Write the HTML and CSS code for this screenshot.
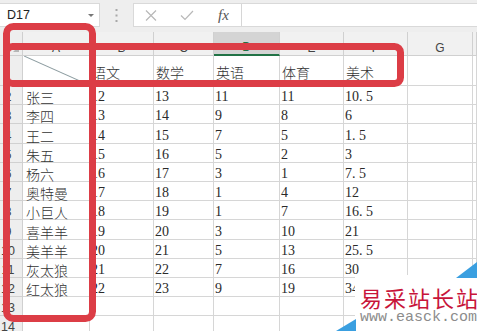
FILE: index.html
```html
<!DOCTYPE html>
<html lang="zh">
<head>
<meta charset="utf-8">
<title>Sheet</title>
<link rel="stylesheet" href="styles.css">
</head>
<body>
<div class="app">
  <div class="fbar">
    <div class="namebox"><span class="ref">D17</span><span class="caret"></span></div>
    <div class="grip">
      <svg width="3" height="13" viewBox="0 0 3 13"><rect x="0.5" y="0" width="2" height="2" fill="#a8a8a8"/><rect x="0.5" y="5.5" width="2" height="2" fill="#a8a8a8"/><rect x="0.5" y="11" width="2" height="2" fill="#a8a8a8"/></svg>
    </div>
    <div class="fbox">
      <div class="btns">
        <svg class="ico ico-x" width="12" height="11" viewBox="0 0 12 11"><path d="M1 0.5 L11 10.5 M11 0.5 L1 10.5" stroke="#b8b8b8" stroke-width="1.2" fill="none"/></svg>
        <svg class="ico ico-ok" width="14" height="11" viewBox="0 0 14 11"><path d="M1 5.5 L5 9.5 L13 1" stroke="#b8b8b8" stroke-width="1.2" fill="none"/></svg>
        <span class="fx">fx</span>
      </div>
      <div class="input"></div>
    </div>
  </div>

  <div class="sheet">
    <div class="corner"><span class="tri"></span></div>
    <div class="ch">A</div><div class="ch">B</div><div class="ch">C</div><div class="ch sel">D</div><div class="ch">E</div><div class="ch">F</div><div class="ch">G</div><div class="ch"></div>

    <div class="rh">1</div>
    <div class="c diag"><svg class="diag-line" viewBox="0 0 66 29" preserveAspectRatio="none"><line x1="0" y1="0" x2="66" y2="29" stroke="#8c9ca0" stroke-width="1" vector-effect="non-scaling-stroke"/></svg></div>
    <div class="c t">语文</div><div class="c t">数学</div><div class="c t">英语</div><div class="c t">体育</div><div class="c t">美术</div><div class="c"></div><div class="c"></div>

    <div class="rh">2</div><div class="c n">张三</div><div class="c">12</div><div class="c">13</div><div class="c">11</div><div class="c">11</div><div class="c">10<span class="pt">.</span>5</div><div class="c"></div><div class="c"></div>
    <div class="rh">3</div><div class="c n">李四</div><div class="c">13</div><div class="c">14</div><div class="c">9</div><div class="c">8</div><div class="c">6</div><div class="c"></div><div class="c"></div>
    <div class="rh">4</div><div class="c n">王二</div><div class="c">14</div><div class="c">15</div><div class="c">7</div><div class="c">5</div><div class="c">1<span class="pt">.</span>5</div><div class="c"></div><div class="c"></div>
    <div class="rh">5</div><div class="c n">朱五</div><div class="c">15</div><div class="c">16</div><div class="c">5</div><div class="c">2</div><div class="c">3</div><div class="c"></div><div class="c"></div>
    <div class="rh">6</div><div class="c n">杨六</div><div class="c">16</div><div class="c">17</div><div class="c">3</div><div class="c">1</div><div class="c">7<span class="pt">.</span>5</div><div class="c"></div><div class="c"></div>
    <div class="rh">7</div><div class="c n">奥特曼</div><div class="c">17</div><div class="c">18</div><div class="c">1</div><div class="c">4</div><div class="c">12</div><div class="c"></div><div class="c"></div>
    <div class="rh">8</div><div class="c n">小巨人</div><div class="c">18</div><div class="c">19</div><div class="c">1</div><div class="c">7</div><div class="c">16<span class="pt">.</span>5</div><div class="c"></div><div class="c"></div>
    <div class="rh">9</div><div class="c n">喜羊羊</div><div class="c">19</div><div class="c">20</div><div class="c">3</div><div class="c">10</div><div class="c">21</div><div class="c"></div><div class="c"></div>
    <div class="rh">10</div><div class="c n">美羊羊</div><div class="c">20</div><div class="c">21</div><div class="c">5</div><div class="c">13</div><div class="c">25<span class="pt">.</span>5</div><div class="c"></div><div class="c"></div>
    <div class="rh">11</div><div class="c n">灰太狼</div><div class="c">21</div><div class="c">22</div><div class="c">7</div><div class="c">16</div><div class="c">30</div><div class="c"></div><div class="c"></div>
    <div class="rh">12</div><div class="c n">红太狼</div><div class="c">22</div><div class="c">23</div><div class="c">9</div><div class="c">19</div><div class="c">34<span class="pt">.</span>5</div><div class="c"></div><div class="c"></div>
    <div class="rh">13</div><div class="c"></div><div class="c"></div><div class="c"></div><div class="c"></div><div class="c"></div><div class="c"></div><div class="c"></div><div class="c"></div>
    <div class="rh">14</div><div class="c"></div><div class="c"></div><div class="c"></div><div class="c"></div><div class="c"></div><div class="c"></div><div class="c"></div><div class="c"></div>
  </div>

  <svg class="marks" width="477" height="331" viewBox="0 0 477 331">
    <rect x="6.5" y="26.5" width="86" height="292" rx="7" fill="none" stroke="#dc3d46" stroke-width="7"/>
    <rect x="6.5" y="46.5" width="394" height="37" rx="6" fill="none" stroke="#dc3d46" stroke-width="7"/>
  </svg>

  <div class="wm">
    <svg class="wm-bg" width="141" height="69" viewBox="0 0 141 69">
      <rect x="19" y="13" width="122" height="56" fill="#ffffff"/>
      <polygon points="120,16 141,0 141,16" fill="#3a9fe0"/>
      <polygon points="0,69 20,57 20,69" fill="#3a9fe0"/>
    </svg>
    <div class="wm-body">
      <div class="wm-cn">易采站长站</div>
      <div class="wm-url">www.easck.com</div>
    </div>
  </div>
</div>
</body>
</html>
```
FILE: styles.css
```css
* { box-sizing: border-box; margin: 0; padding: 0; }
html, body { width: 477px; height: 331px; overflow: hidden; background: #ffffff; }
body { font-family: "Liberation Sans", Arial, sans-serif; }

.app { position: relative; width: 477px; height: 331px; overflow: hidden; background: #ffffff; }

/* formula bar */
.fbar { height: 32px; background: #eeeeee; display: flex; align-items: flex-start; padding-top: 3px; }
.namebox { width: 100px; height: 24px; background: #ffffff; border: 1px solid #d9d9d9; border-left: none;
  display: flex; align-items: center; justify-content: space-between; padding: 0 5px 0 7px; }
.ref { font-size: 12.5px; color: #222222; }
.caret { width: 0; height: 0; border-left: 3px solid transparent; border-right: 3px solid transparent; border-top: 3px solid #777777; }
.grip { width: 33px; height: 24px; display: flex; align-items: center; justify-content: center; }
.fbox { flex: 1; height: 24px; background: #ffffff; border: 1px solid #d9d9d9; border-right: none; display: flex; }
.btns { width: 108px; display: flex; align-items: center; padding-left: 11px; border-right: 1px solid #d6d6d6; }
.ico { display: block; }
.ico-ok { margin-left: 23px; }
.fx { margin-left: 24px; font-family: "Liberation Serif", serif; font-style: italic; font-size: 15px; color: #555555; line-height: 15px; }
.input { flex: 1; }

/* sheet grid */
.sheet { display: grid;
  grid-template-columns: 23px 67px 64px 60px 66px 64px 64px 65px 1fr;
  grid-template-rows: 24px 30px repeat(13, 19.2px); }
.sheet > div { border-right: 1px solid #d6d6d6; border-bottom: 1px solid #d6d6d6; white-space: nowrap; }

.corner { background: #eeeeee; display: flex; align-items: flex-end; justify-content: flex-end; padding: 0 3px 3px 0; border-color: #cfcfcf !important; }
.tri { width: 0; height: 0; border-left: 6px solid transparent; border-bottom: 6px solid #b6b6b6; }

.ch { background: #f1f1f1; border-color: #d0d0d0 !important; font-size: 12px; line-height: 13px; color: #444444;
  display: flex; align-items: flex-end; justify-content: center; }
.ch.sel { background: #d4d4d4; border-bottom: 2px solid #217346 !important; color: #217346; }

.rh { background: #eeeeee; border-color: #d0d0d0 !important; font-size: 12.5px; line-height: 14px; color: #444444;
  display: flex; align-items: flex-end; justify-content: center; padding-right: 6px; }

.c { font-family: "Liberation Serif", "Noto Sans CJK SC", serif; font-size: 14px; line-height: 14px; color: #2a2a2a;
  display: flex; align-items: flex-end; padding-left: 1px; }
.c.n { font-family: "Noto Sans CJK SC", sans-serif; font-weight: 300; color: #333333; padding-left: 3px; }
.c.t { font-family: "Noto Sans CJK SC", sans-serif; font-weight: 300; color: #333333; align-items: center; padding-left: 2px; padding-top: 2px; }
.pt { display: inline-block; width: 7px; }

.diag { position: relative; }
.diag-line { display: block; width: 100%; height: 100%; }

/* annotation overlay */
.marks { position: absolute; left: 0; top: 0; pointer-events: none; }

/* watermark */
.wm { position: absolute; left: 336px; top: 262px; width: 141px; height: 69px; }
.wm-bg { position: absolute; left: 0; top: 0; }
.wm-body { position: relative; padding: 24px 0 0 24px; white-space: nowrap; }
.wm-cn { font-family: "Noto Sans CJK SC", sans-serif; font-size: 22px; line-height: 22px; letter-spacing: 2px; color: #c8153a; }
.wm-url { margin-top: 2px; font-family: "Liberation Mono", monospace; font-size: 15px; line-height: 15px; color: #8c8c8c; }
```
